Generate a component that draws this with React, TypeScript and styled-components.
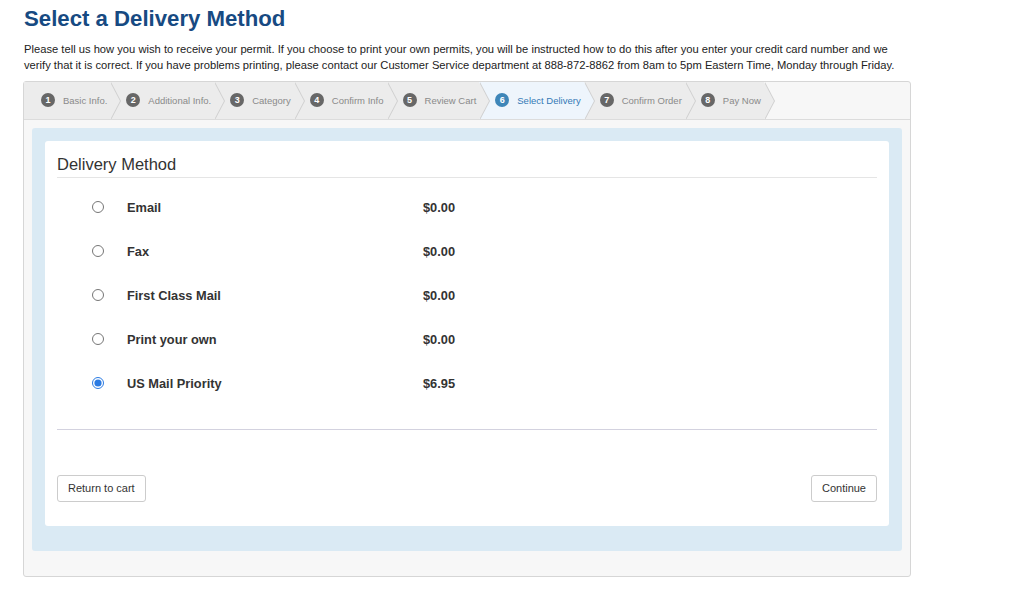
import React from 'react'
import styled, { createGlobalStyle, css } from 'styled-components'

const GlobalStyle = createGlobalStyle`
  body {
    margin: 0;
    background: #fff;
    font-family: "Liberation Sans", Arial, sans-serif;
    color: #333;
  }
`

const Page = styled.div`
  padding: 0 0 0 23px;
  width: 888px;
`

const Title = styled.h1`
  margin: 7px 0 10px 1px;
  font-size: 22.2px;
  line-height: 24px;
  font-weight: 700;
  color: #174a82;
`

const Intro = styled.p`
  margin: 0 0 8px 1px;
  font-size: 11.2px;
  line-height: 16px;
  color: #222;
`

const Wizard = styled.div`
  box-sizing: border-box;
  width: 888px;
  background: #f7f7f7;
  border: 1px solid #d6d6d6;
  border-radius: 3px;
`

const StepBar = styled.div`
  display: flex;
  height: 37px;
  border-bottom: 1px solid #dcdcdc;
  overflow: hidden;
`

const Step = styled.div<{ $active?: boolean; $first?: boolean }>`
  position: relative;
  display: flex;
  align-items: center;
  gap: 8px;
  padding: 0 3px 1px ${(p) => (p.$first ? '17px' : '16px')};
  background: ${(p) => (p.$active ? '#eef5fc' : '#ececec')};
  font-size: 9.5px;
  color: ${(p) => (p.$active ? '#3479b6' : '#8a8a8a')};
  white-space: nowrap;

  &::before,
  &::after {
    content: '';
    position: absolute;
    top: 50%;
    margin-top: -19px;
    border-top: 19px solid transparent;
    border-bottom: 19px solid transparent;
    z-index: 2;
  }
  &::before {
    left: calc(100% + 1px);
    border-left: 10px solid #cfcfcf;
  }
  &::after {
    left: 100%;
    border-left: 10px solid ${(p) => (p.$active ? '#eef5fc' : '#ececec')};
  }
`

const StepNum = styled.span<{ $active?: boolean }>`
  display: inline-flex;
  align-items: center;
  justify-content: center;
  width: 14px;
  height: 14px;
  border-radius: 50%;
  background: ${(p) => (p.$active ? '#3e86b8' : '#676767')};
  color: #fff;
  font-size: 9px;
  font-weight: 700;
`

const Body = styled.div`
  padding: 8px 8px 25px;
`

const Panel = styled.div`
  background: #daeaf4;
  border-radius: 3px;
  padding: 13px 13px 25px;
`

const Card = styled.div`
  background: #fff;
  border-radius: 3px;
  padding: 12px 12px 24px;
`

const CardHeading = styled.h2`
  margin: 0;
  padding-bottom: 1px;
  font-size: 16.5px;
  line-height: 23px;
  font-weight: 400;
  color: #333;
  border-bottom: 1px solid #e5e5e5;
`

const Options = styled.div`
  margin: 7px 0 24px;
`

const OptionRow = styled.label`
  display: grid;
  grid-template-columns: 70px 296px auto;
  align-items: center;
  height: 44px;
  font-size: 12.8px;
  font-weight: 700;
  color: #333;
`

const Radio = styled.input`
  width: 12px;
  height: 12px;
  margin: 0 0 0 35px;
  accent-color: #2a7ae2;
`

const Divider = styled.hr`
  margin: 0;
  border: 0;
  border-top: 1px solid #d3d2df;
`

const Actions = styled.div`
  display: flex;
  justify-content: space-between;
  margin-top: 45px;
`

const buttonBase = css`
  font-family: "Liberation Sans", Arial, sans-serif;
  font-size: 11px;
  line-height: 15px;
  padding: 5px 10px;
  border: 1px solid #cccccc;
  border-radius: 3px;
  background: #fff;
  color: #333;
`

const Button = styled.button`
  ${buttonBase}
`

const steps = [
  'Basic Info.',
  'Additional Info.',
  'Category',
  'Confirm Info',
  'Review Cart',
  'Select Delivery',
  'Confirm Order',
  'Pay Now',
]

const methods = [
  { name: 'Email', price: '$0.00' },
  { name: 'Fax', price: '$0.00' },
  { name: 'First Class Mail', price: '$0.00' },
  { name: 'Print your own', price: '$0.00' },
  { name: 'US Mail Priority', price: '$6.95' },
]

export default function App() {
  const activeStep = 5

  return (
    <Page>
      <GlobalStyle />
      <Title>Select a Delivery Method</Title>
      <Intro>
        Please tell us how you wish to receive your permit. If you choose to print your own permits, you will be
        instructed how to do this after you enter your credit card number and we verify that it is correct. If you have
        problems printing, please contact our Customer Service department at 888-872-8862 from 8am to 5pm Eastern Time,
        Monday through Friday.
      </Intro>
      <Wizard>
        <StepBar>
          {steps.map((label, i) => (
            <Step key={label} $first={i === 0} $active={i === activeStep}>
              <StepNum $active={i === activeStep}>{i + 1}</StepNum>
              {label}
            </Step>
          ))}
        </StepBar>
        <Body>
          <Panel>
            <Card>
              <CardHeading>Delivery Method</CardHeading>
              <Options>
                {methods.map((m, i) => (
                  <OptionRow key={m.name}>
                    <Radio type="radio" name="delivery" defaultChecked={i === methods.length - 1} />
                    <span>{m.name}</span>
                    <span>{m.price}</span>
                  </OptionRow>
                ))}
              </Options>
              <Divider />
              <Actions>
                <Button>Return to cart</Button>
                <Button>Continue</Button>
              </Actions>
            </Card>
          </Panel>
        </Body>
      </Wizard>
    </Page>
  )
}
